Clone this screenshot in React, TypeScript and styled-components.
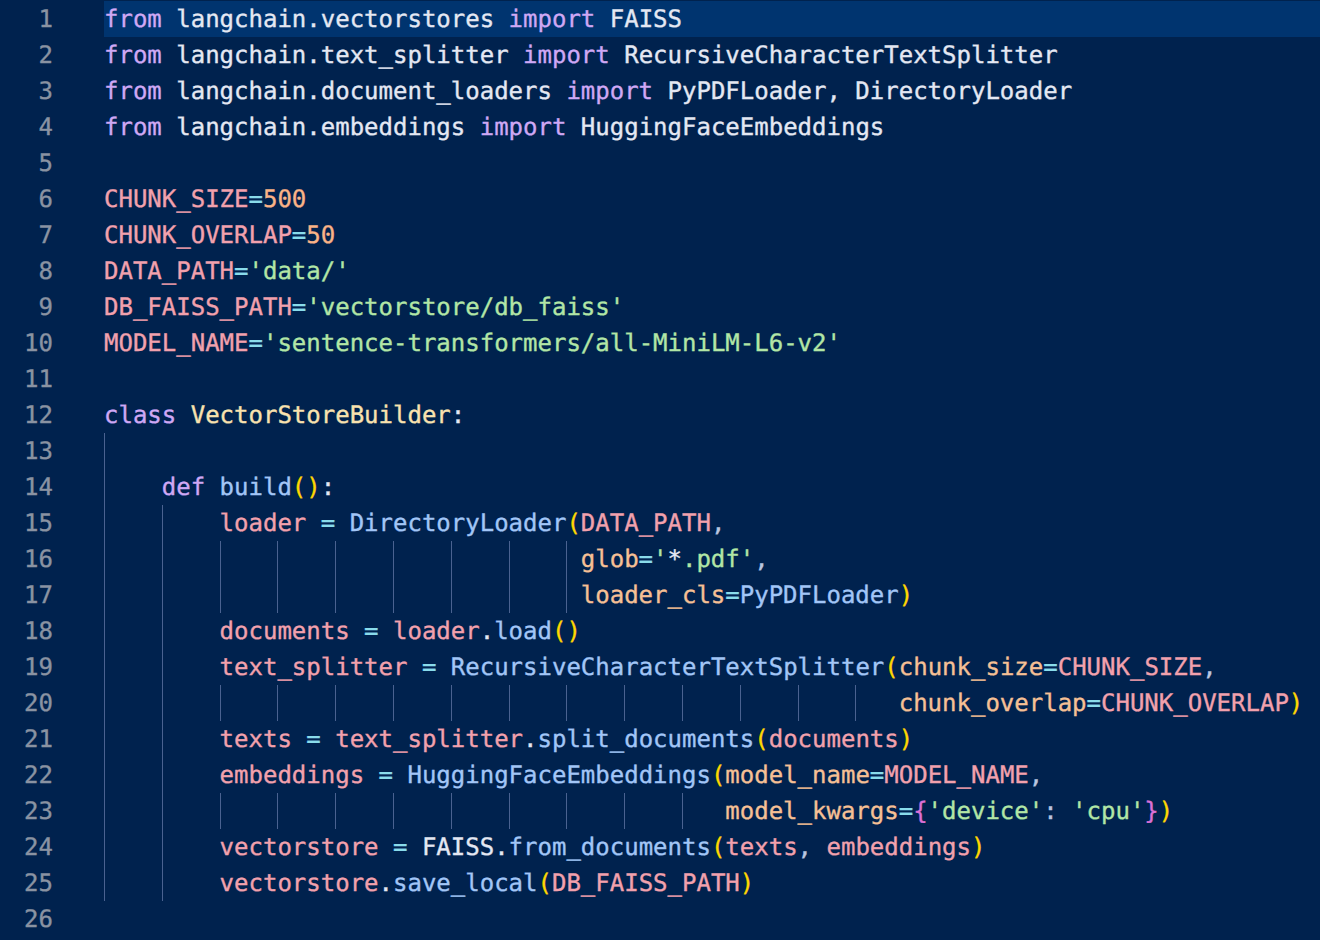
import React from "react";
import styled, { createGlobalStyle } from "styled-components";

const GlobalStyle = createGlobalStyle`
  html, body {
    margin: 0;
    padding: 0;
    background: #00224e;
  }
`;

type Kind = "kw" | "tx" | "vr" | "op" | "nm" | "st" | "fn" | "cl" | "pa" | "b1" | "b2" | "pu";

const COLORS: Record<Kind, string> = {
  kw: "#cfa8f5",
  tx: "#e4e8f3",
  vr: "#f2a1ad",
  op: "#89dceb",
  nm: "#fab387",
  st: "#b2e6a6",
  fn: "#a2c6f7",
  cl: "#f9e2af",
  pa: "#f6c095",
  b1: "#ffd700",
  b2: "#da70d6",
  pu: "#bac6e0",
};

type Tok = [string, Kind];
type Line = { indent: number; toks: Tok[]; active?: boolean };

const L = (indent: number, ...toks: Tok[]): Line => ({ indent, toks });
const sp: Tok = [" ", "tx"];
const eq: Tok[] = [sp, ["=", "op"], sp];

const lines: Line[] = [
  { indent: 0, active: true, toks: [["from", "kw"], [" langchain.vectorstores ", "tx"], ["import", "kw"], [" FAISS", "tx"]] },
  L(0, ["from", "kw"], [" langchain.text_splitter ", "tx"], ["import", "kw"], [" RecursiveCharacterTextSplitter", "tx"]),
  L(0, ["from", "kw"], [" langchain.document_loaders ", "tx"], ["import", "kw"], [" PyPDFLoader, DirectoryLoader", "tx"]),
  L(0, ["from", "kw"], [" langchain.embeddings ", "tx"], ["import", "kw"], [" HuggingFaceEmbeddings", "tx"]),
  L(0),
  L(0, ["CHUNK_SIZE", "vr"], ["=", "op"], ["500", "nm"]),
  L(0, ["CHUNK_OVERLAP", "vr"], ["=", "op"], ["50", "nm"]),
  L(0, ["DATA_PATH", "vr"], ["=", "op"], ["'data/'", "st"]),
  L(0, ["DB_FAISS_PATH", "vr"], ["=", "op"], ["'vectorstore/db_faiss'", "st"]),
  L(0, ["MODEL_NAME", "vr"], ["=", "op"], ["'sentence-transformers/all-MiniLM-L6-v2'", "st"]),
  L(0),
  L(0, ["class", "kw"], sp, ["VectorStoreBuilder", "cl"], [":", "tx"]),
  L(4),
  L(4, ["def", "kw"], sp, ["build", "fn"], ["()", "b1"], [":", "tx"]),
  L(8, ["loader", "vr"], ...eq, ["DirectoryLoader", "fn"], ["(", "b1"], ["DATA_PATH", "vr"], [",", "pu"]),
  L(33, ["glob", "pa"], ["=", "op"], ["'", "st"], ["*", "tx"], [".pdf'", "st"], [",", "pu"]),
  L(33, ["loader_cls", "pa"], ["=", "op"], ["PyPDFLoader", "fn"], [")", "b1"]),
  L(8, ["documents", "vr"], ...eq, ["loader", "vr"], [".", "tx"], ["load", "fn"], ["()", "b1"]),
  L(8, ["text_splitter", "vr"], ...eq, ["RecursiveCharacterTextSplitter", "fn"], ["(", "b1"], ["chunk_size", "pa"], ["=", "op"], ["CHUNK_SIZE", "vr"], [",", "pu"]),
  L(55, ["chunk_overlap", "pa"], ["=", "op"], ["CHUNK_OVERLAP", "vr"], [")", "b1"]),
  L(8, ["texts", "vr"], ...eq, ["text_splitter", "vr"], [".", "tx"], ["split_documents", "fn"], ["(", "b1"], ["documents", "vr"], [")", "b1"]),
  L(8, ["embeddings", "vr"], ...eq, ["HuggingFaceEmbeddings", "fn"], ["(", "b1"], ["model_name", "pa"], ["=", "op"], ["MODEL_NAME", "vr"], [",", "pu"]),
  L(43, ["model_kwargs", "pa"], ["=", "op"], ["{", "b2"], ["'device'", "st"], [":", "pu"], sp, ["'cpu'", "st"], ["}", "b2"], [")", "b1"]),
  L(8, ["vectorstore", "vr"], ...eq, ["FAISS", "tx"], [".", "tx"], ["from_documents", "fn"], ["(", "b1"], ["texts", "vr"], [",", "pu"], sp, ["embeddings", "vr"], [")", "b1"]),
  L(8, ["vectorstore", "vr"], [".", "tx"], ["save_local", "fn"], ["(", "b1"], ["DB_FAISS_PATH", "vr"], [")", "b1"]),
  L(0),
];

const Editor = styled.div`
  padding-top: 1px;
  width: 1320px;
  min-height: 939px;
  background: #00224e;
  font-family: "DejaVu Sans Mono", monospace;
  font-size: 24px;
  line-height: 36px;
  text-rendering: geometricPrecision;
  -webkit-text-stroke: 0.35px currentColor;
`;

const Row = styled.div`
  display: grid;
  grid-template-columns: 53px 1fr;
  column-gap: 51px;
  height: 36px;
`;

const Gutter = styled.div`
  text-align: right;
  color: #8a93a2;
`;

const Code = styled.div<{ $active?: boolean }>`
  white-space: pre;
  background: ${(p) => (p.$active ? "#00346f" : "transparent")};
`;

const Guide = styled.span<{ $w: number }>`
  display: inline-block;
  vertical-align: top;
  height: 36px;
  width: ${(p) => p.$w}ch;
  box-sizing: border-box;
  border-left: 1px solid #4a6290;
`;

const Tk = styled.span<{ $k: Kind }>`
  color: ${(p) => COLORS[p.$k]};
`;

function Guides({ indent }: { indent: number }) {
  const out: React.ReactNode[] = [];
  for (let c = 0; c < indent; c += 4) {
    out.push(<Guide key={c} $w={Math.min(4, indent - c)} />);
  }
  return <>{out}</>;
}

export default function App() {
  return (
    <>
      <GlobalStyle />
      <Editor>
        {lines.map((ln, i) => (
          <Row key={i}>
            <Gutter>{i + 1}</Gutter>
            <Code $active={ln.active}>
              <Guides indent={ln.indent} />
              {ln.toks.map(([t, k], j) => (
                <Tk key={j} $k={k}>
                  {t}
                </Tk>
              ))}
            </Code>
          </Row>
        ))}
      </Editor>
    </>
  );
}
